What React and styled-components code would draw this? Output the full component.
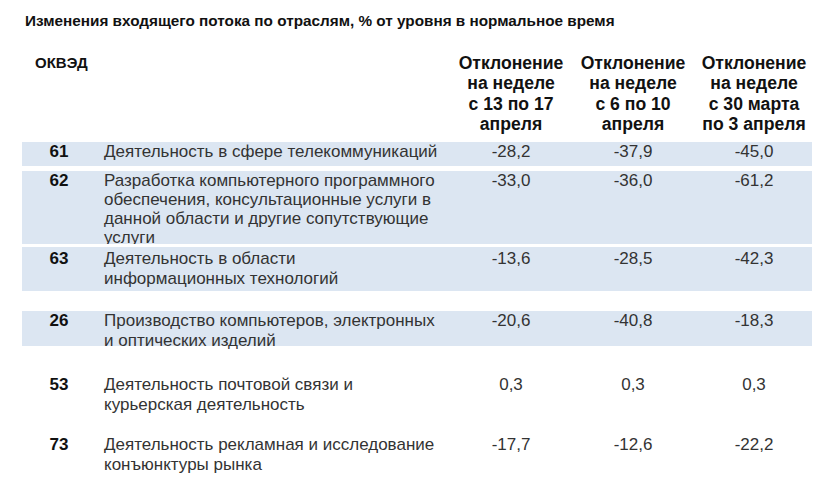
import React from 'react';
import styled, { createGlobalStyle } from 'styled-components';

const GlobalStyle = createGlobalStyle`
  body {
    margin: 0;
    background: #ffffff;
    font-family: "Liberation Sans", Arial, sans-serif;
  }
`;

const Page = styled.div`
  width: 818px;
  height: 500px;
  overflow: hidden;
  padding: 10px 6px 0 22px;
  box-sizing: border-box;
  color: #333333;
`;

const Title = styled.div`
  margin-left: 3px;
  font-size: 15.3px;
  font-weight: bold;
  line-height: 22px;
  color: #111111;
`;

const Grid = styled.div`
  display: grid;
  grid-template-columns: 74px 360px 110px 134px 108px;
  align-items: start;
`;

const HeadRow = styled(Grid)`
  margin-top: 21px;
  height: 86px;
`;

const CodeHead = styled.div`
  padding-left: 13px;
  font-size: 15px;
  font-weight: bold;
  line-height: 20px;
  color: #111111;
`;

const ColHead = styled.div`
  grid-column: ${props => props.col};
  text-align: center;
  white-space: nowrap;
  font-size: 17.6px;
  font-weight: bold;
  line-height: 20.4px;
  color: #111111;
`;

const Row = styled(Grid)`
  margin-top: ${props => props.gap}px;
  height: ${props => props.h}px;
  padding-top: ${props => props.pad || 0}px;
  box-sizing: border-box;
  background: ${props => (props.shaded ? '#dce6f2' : 'transparent')};
  overflow: ${props => (props.clip ? 'hidden' : 'visible')};
  line-height: ${props => props.lh || 20}px;
  font-size: 17px;
`;

const Code = styled.div`
  text-align: center;
  font-weight: bold;
  color: #111111;
`;

const Desc = styled.div`
  padding-left: 8px;
`;

const Value = styled.div`
  text-align: center;
`;

const rows = [
  { code: '61', desc: 'Деятельность в сфере телекоммуникаций', v: ['-28,2', '-37,9', '-45,0'], gap: 3, h: 24, shaded: true },
  { code: '62', desc: 'Разработка компьютерного программного обеспечения, консультационные услуги в данной области и другие сопутствующие услуги', v: ['-33,0', '-36,0', '-61,2'], gap: 5, h: 73, lh: 19, shaded: true, clip: true },
  { code: '63', desc: ['Деятельность в области', 'информационных технологий'], v: ['-13,6', '-28,5', '-42,3'], gap: 3, h: 44, pad: 2, shaded: true },
  { code: '26', desc: ['Производство компьютеров, электронных', 'и оптических изделий'], v: ['-20,6', '-40,8', '-18,3'], gap: 20, h: 35, shaded: true },
  { code: '53', desc: ['Деятельность почтовой связи и', 'курьерская деятельность'], v: ['0,3', '0,3', '0,3'], gap: 29, h: 40 },
  { code: '73', desc: ['Деятельность рекламная и исследование', 'конъюнктуры рынка'], v: ['-17,7', '-12,6', '-22,2'], gap: 20, h: 40 },
];

export default function App() {
  return (
    <Page>
      <GlobalStyle />
      <Title>Изменения входящего потока по отраслям, % от уровня в нормальное время</Title>
      <HeadRow>
        <CodeHead>ОКВЭД</CodeHead>
        <ColHead col={3}>Отклонение<br />на неделе<br />с 13 по 17<br />апреля</ColHead>
        <ColHead col={4}>Отклонение<br />на неделе<br />с 6 по 10<br />апреля</ColHead>
        <ColHead col={5}>Отклонение<br />на неделе<br />с 30 марта<br />по 3 апреля</ColHead>
      </HeadRow>
      {rows.map(r => (
        <Row key={r.code} gap={r.gap} h={r.h} pad={r.pad} lh={r.lh} shaded={r.shaded} clip={r.clip}>
          <Code>{r.code}</Code>
          <Desc>
            {Array.isArray(r.desc)
              ? r.desc.map((line, i) => <div key={i}>{line}</div>)
              : r.desc}
          </Desc>
          {r.v.map((val, i) => (
            <Value key={i}>{val}</Value>
          ))}
        </Row>
      ))}
    </Page>
  );
}
